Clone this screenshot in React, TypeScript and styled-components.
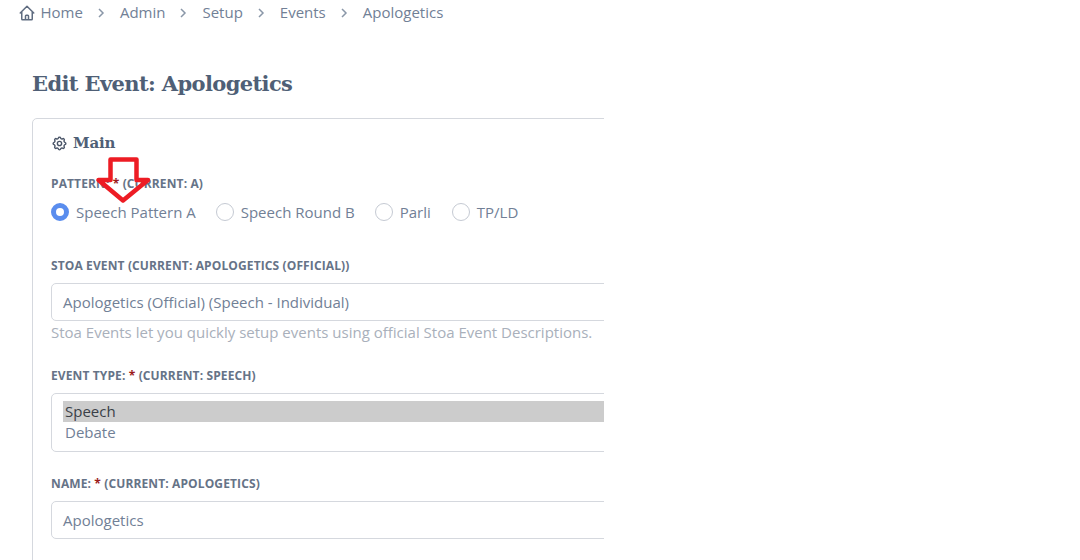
import React from 'react';
import styled, { createGlobalStyle } from 'styled-components';
import { HiOutlineHome, HiOutlineCog } from 'react-icons/hi';

const GlobalStyle = createGlobalStyle`
  html, body {
    margin: 0;
    padding: 0;
    background: #fff;
    font-family: "Open Sans", "Liberation Sans", sans-serif;
    color: #718096;
  }
`;

const Page = styled.div`
  position: relative;
  width: 1080px;
  height: 560px;
  overflow: hidden;
`;

const Clip = styled.div`
  width: 604px;
  height: 560px;
  overflow: hidden;
`;

const Breadcrumbs = styled.nav`
  display: flex;
  align-items: center;
  height: 25px;
  padding-left: 18px;
  font-size: 15px;
  line-height: 25px;
  color: #718096;
  white-space: nowrap;
`;

const Crumb = styled.span`
  display: inline-flex;
  align-items: center;
  gap: 4.5px;
`;

const Chevron = styled.svg`
  width: 8px;
  height: 10px;
  margin: 0 15px 0 14px;
  fill: none;
  stroke: #8a97a8;
  stroke-width: 1.5;
`;

const Title = styled.h1`
  margin: 45px 0 0 32px;
  font-family: "DejaVu Serif", "Liberation Serif", serif;
  font-size: 21px;
  font-weight: 700;
  line-height: 28px;
  letter-spacing: -0.62px;
  color: #4f5f76;
  white-space: nowrap;
`;

const Card = styled.section`
  width: 640px;
  height: 470px;
  margin: 20px 0 0 32px;
  padding: 14px 18px;
  box-sizing: border-box;
  border: 1px solid #d5d8de;
  border-radius: 5px;
`;

const CardTitle = styled.h2`
  display: flex;
  align-items: center;
  gap: 5px;
  margin: 0;
  height: 20px;
  font-family: "DejaVu Serif", "Liberation Serif", serif;
  font-size: 15px;
  font-weight: 700;
  color: #4f5f76;
  letter-spacing: -0.2px;
`;

const Field = styled.div<{ $top: number }>`
  margin-top: ${(p) => p.$top}px;
`;

const Label = styled.label`
  display: block;
  font-size: 12px;
  font-weight: 700;
  line-height: 16px;
  letter-spacing: 0.12px;
  color: #667387;
  white-space: nowrap;
`;

const Required = styled.span`
  color: #9b1c1c;
`;

const RadioRow = styled.div`
  display: flex;
  align-items: center;
  height: 22px;
  margin-top: 9px;
`;

const RadioItem = styled.span<{ $gap: number }>`
  display: inline-flex;
  align-items: center;
  gap: 7px;
  margin-right: ${(p) => p.$gap}px;
  font-size: 15px;
  color: #718096;
`;

const RadioDot = styled.span<{ $on?: boolean }>`
  width: 18px;
  height: 18px;
  box-sizing: border-box;
  border-radius: 50%;
  border: ${(p) => (p.$on ? '5.5px solid #5a8dee' : '1px solid #c5cad3')};
  background: #fff;
`;

const Input = styled.div`
  height: 38px;
  margin-top: 9px;
  padding: 0 11px;
  box-sizing: border-box;
  border: 1px solid #d5d8de;
  border-radius: 5px;
  font-size: 15px;
  line-height: 36px;
  color: #718096;
  white-space: nowrap;
`;

const Hint = styled.p`
  margin: 1px 0 0;
  font-size: 15px;
  line-height: 20px;
  color: #a9b0bb;
  white-space: nowrap;
`;

const ListBox = styled.div`
  height: 59px;
  margin-top: 9px;
  padding: 7px 11px;
  box-sizing: border-box;
  border: 1px solid #d5d8de;
  border-radius: 5px;
`;

const ListOption = styled.div<{ $selected?: boolean }>`
  height: 21px;
  padding-left: 2px;
  font-size: 15px;
  line-height: 21px;
  color: ${(p) => (p.$selected ? '#3a3f47' : '#718096')};
  background: ${(p) => (p.$selected ? '#cccccc' : 'transparent')};
`;

const ArrowMark = styled.svg`
  position: absolute;
  left: 94px;
  top: 155px;
  width: 62px;
  height: 50px;
  fill: none;
  stroke: #ed1c24;
  stroke-width: 4.5;
  stroke-linejoin: round;
`;

const crumbs = ['Admin', 'Setup', 'Events', 'Apologetics'];
const radios = [
  { label: 'Speech Pattern A', gap: 20, on: true },
  { label: 'Speech Round B', gap: 20 },
  { label: 'Parli', gap: 21 },
  { label: 'TP/LD', gap: 0 },
];

const App: React.FC = () => (
  <Page>
    <GlobalStyle />
    <Clip>
      <Breadcrumbs>
        <Crumb>
          <HiOutlineHome size={18} color="#5f6c80" />
          Home
        </Crumb>
        {crumbs.map((crumb) => (
          <React.Fragment key={crumb}>
            <Chevron viewBox="0 0 8 10">
              <path d="M2 1l4 4-4 4" />
            </Chevron>
            <Crumb>{crumb}</Crumb>
          </React.Fragment>
        ))}
      </Breadcrumbs>

      <Title>Edit Event: Apologetics</Title>

      <Card>
        <CardTitle>
          <HiOutlineCog size={17} color="#4a5568" />
          Main
        </CardTitle>

        <Field $top={23}>
          <Label>
            PATTERN: <Required>*</Required> (CURRENT: A)
          </Label>
          <RadioRow>
            {radios.map((radio) => (
              <RadioItem key={radio.label} $gap={radio.gap}>
                <RadioDot $on={radio.on} />
                {radio.label}
              </RadioItem>
            ))}
          </RadioRow>
        </Field>

        <Field $top={35}>
          <Label>STOA EVENT (CURRENT: APOLOGETICS (OFFICIAL))</Label>
          <Input>Apologetics (Official) (Speech - Individual)</Input>
          <Hint>Stoa Events let you quickly setup events using official Stoa Event Descriptions.</Hint>
        </Field>

        <Field $top={26}>
          <Label>
            EVENT TYPE: <Required>*</Required> (CURRENT: SPEECH)
          </Label>
          <ListBox>
            <ListOption $selected>Speech</ListOption>
            <ListOption>Debate</ListOption>
          </ListBox>
        </Field>

        <Field $top={24}>
          <Label>
            NAME: <Required>*</Required> (CURRENT: APOLOGETICS)
          </Label>
          <Input>Apologetics</Input>
        </Field>
      </Card>
    </Clip>

    <ArrowMark viewBox="0 0 62 50">
      <path d="M16.5 4.5H42.5V25H54L29 45.5L4.5 25H16.5Z" />
    </ArrowMark>
  </Page>
);

export default App;
